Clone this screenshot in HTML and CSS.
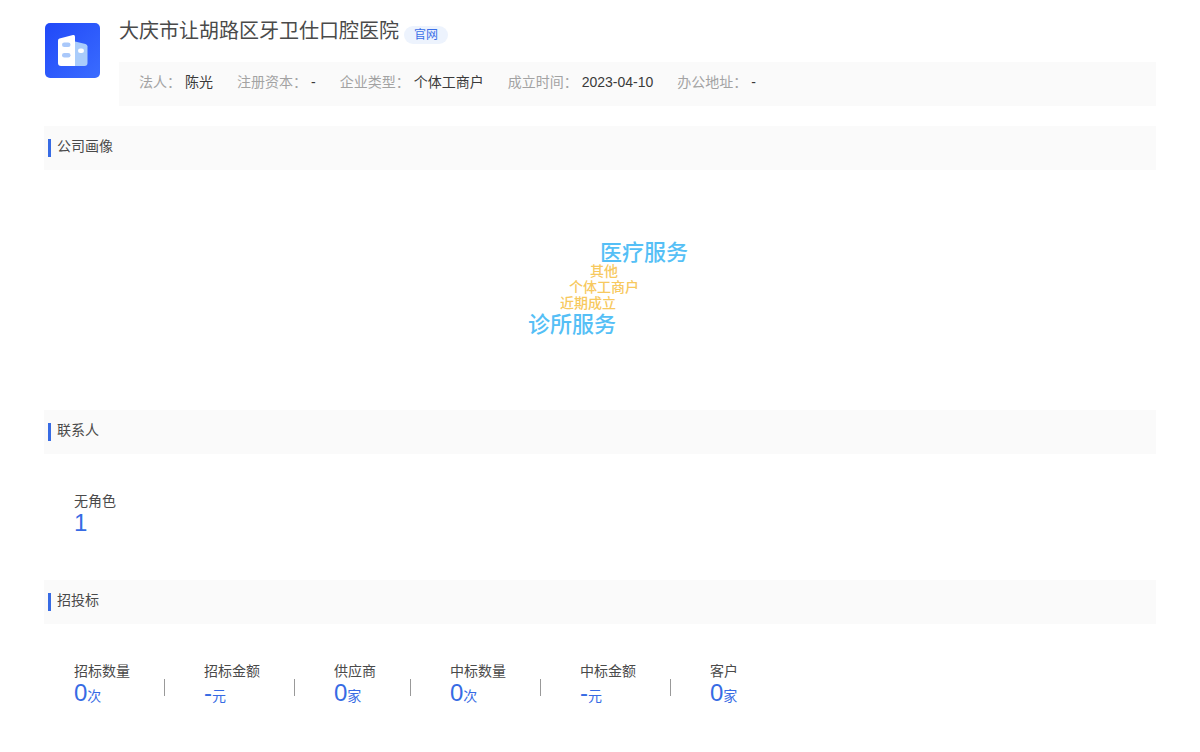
FILE: index.html
```html
<!DOCTYPE html>
<html lang="zh-CN">
<head>
<meta charset="utf-8">
<title>大庆市让胡路区牙卫仕口腔医院</title>
<link rel="stylesheet" href="styles.css">
</head>
<body>
<main class="page">
  <header class="company">
    <svg class="logo" viewBox="0 0 55 55" aria-hidden="true">
      <defs>
        <linearGradient id="logo-bg" x1="0" y1="0" x2="1" y2="1">
          <stop offset="0" stop-color="#2048f8"/>
          <stop offset="1" stop-color="#3a6cff"/>
        </linearGradient>
      </defs>
      <rect width="55" height="55" rx="5" fill="url(#logo-bg)"/>
      <path d="M30 18.500L40.500 21Q42.500 21.500 42.500 23.500V40Q42.500 43 39.500 43H30Z" fill="#a9ccfb"/>
      <path d="M13 17.500Q13 16 14.500 15.500L28 12Q30 11.500 30 13.500V43H16Q13 43 13 40Z" fill="#fff"/>
      <rect x="17" y="19.500" width="8.500" height="4.500" rx="2.250" fill="#a9c8fa"/>
      <rect x="17" y="30" width="8.500" height="4.500" rx="2.250" fill="#a9c8fa"/>
      <rect x="33" y="25.500" width="6" height="4.500" rx="2.250" fill="#fff"/>
    </svg>
    <div class="company-body">
      <div class="title-row">
        <h1 class="title">大庆市让胡路区牙卫仕口腔医院</h1>
        <a class="tag" href="#">官网</a>
      </div>
      <dl class="facts">
        <div class="fact"><dt>法人：</dt><dd>陈光</dd></div>
        <div class="fact"><dt>注册资本：</dt><dd>-</dd></div>
        <div class="fact"><dt>企业类型：</dt><dd>个体工商户</dd></div>
        <div class="fact"><dt>成立时间：</dt><dd>2023-04-10</dd></div>
        <div class="fact"><dt>办公地址：</dt><dd>-</dd></div>
      </dl>
    </div>
  </header>

  <section>
    <h2 class="section-title">公司画像</h2>
    <div class="cloud">
      <span class="word word-large word-medical">医疗服务</span>
      <span class="word word-other">其他</span>
      <span class="word word-type">个体工商户</span>
      <span class="word word-recent">近期成立</span>
      <span class="word word-large word-clinic">诊所服务</span>
    </div>
  </section>

  <section>
    <h2 class="section-title">联系人</h2>
    <dl class="stats">
      <div class="stat"><dt>无角色</dt><dd>1</dd></div>
    </dl>
  </section>

  <section>
    <h2 class="section-title">招投标</h2>
    <dl class="stats">
      <div class="stat"><dt>招标数量</dt><dd>0<small>次</small></dd></div>
      <div class="stat"><dt>招标金额</dt><dd>-<small>元</small></dd></div>
      <div class="stat"><dt>供应商</dt><dd>0<small>家</small></dd></div>
      <div class="stat"><dt>中标数量</dt><dd>0<small>次</small></dd></div>
      <div class="stat"><dt>中标金额</dt><dd>-<small>元</small></dd></div>
      <div class="stat"><dt>客户</dt><dd>0<small>家</small></dd></div>
    </dl>
  </section>
</main>
</body>
</html>
```
FILE: styles.css
```css
* {
  box-sizing: border-box;
}

body {
  margin: 0;
  background: #fff;
  color: #4a4a4a;
  font: 14px/20px "Liberation Sans", "Noto Sans CJK SC", sans-serif;
}

h1, h2, dl, dd {
  margin: 0;
  font-weight: 400;
}

.page {
  padding: 18px 44px;
}

.company {
  display: flex;
  gap: 19px;
  margin-bottom: 20px;
}

.logo {
  flex: none;
  width: 55px;
  height: 55px;
  margin: 5px 0 0 1px;
}

.company-body {
  flex: 1;
}

.title-row {
  display: flex;
  align-items: flex-end;
  gap: 5px;
  margin-bottom: 18px;
}

.title {
  font-size: 20px;
  line-height: 26px;
}

.tag {
  padding: 0 10px;
  border-radius: 9px;
  background: #edf3fd;
  color: #3b6fe8;
  font-size: 12px;
  line-height: 18px;
  text-decoration: none;
}

.facts {
  display: flex;
  flex-wrap: wrap;
  gap: 0 24px;
  padding: 10px 20px 14px;
  background: #fafafa;
}

.fact {
  display: flex;
  gap: 4px;
}

.fact dt {
  color: #a3a3a3;
}

.fact dd {
  color: #3a3a3a;
}

.section-title {
  display: flex;
  align-items: center;
  gap: 6px;
  height: 44px;
  padding: 0 4px 4px;
  background: #fafafa;
  font-size: 14px;
}

.section-title::before {
  content: "";
  width: 3px;
  height: 18px;
  margin-top: 4px;
  background: #376be4;
}

.cloud {
  position: relative;
  height: 240px;
}

.word {
  position: absolute;
  color: #f7c95f;
  font-weight: 500;
  line-height: 16px;
}

.word-large {
  color: #55bff6;
  font-size: 22px;
  line-height: 24px;
}

.word-medical {
  top: 71px;
  left: 50%;
}

.word-other {
  top: 93px;
  left: calc(50% - 10px);
}

.word-type {
  top: 109px;
  left: calc(50% - 31px);
}

.word-recent {
  top: 125px;
  left: calc(50% - 40px);
}

.word-clinic {
  top: 143px;
  left: calc(50% - 72px);
}

.stats {
  display: flex;
  flex-wrap: wrap;
  padding: 37px 30px 45px;
}

.stat {
  display: flex;
  flex-direction: column;
  position: relative;
  padding-right: 74px;
}

.stat:not(:last-child)::after {
  content: "";
  position: absolute;
  top: 18px;
  right: 39px;
  width: 1px;
  height: 17px;
  background: #999;
}

.stat dd {
  color: #376be4;
  font-size: 24px;
  line-height: 24px;
}

.stat small {
  font-size: 14px;
}
```
